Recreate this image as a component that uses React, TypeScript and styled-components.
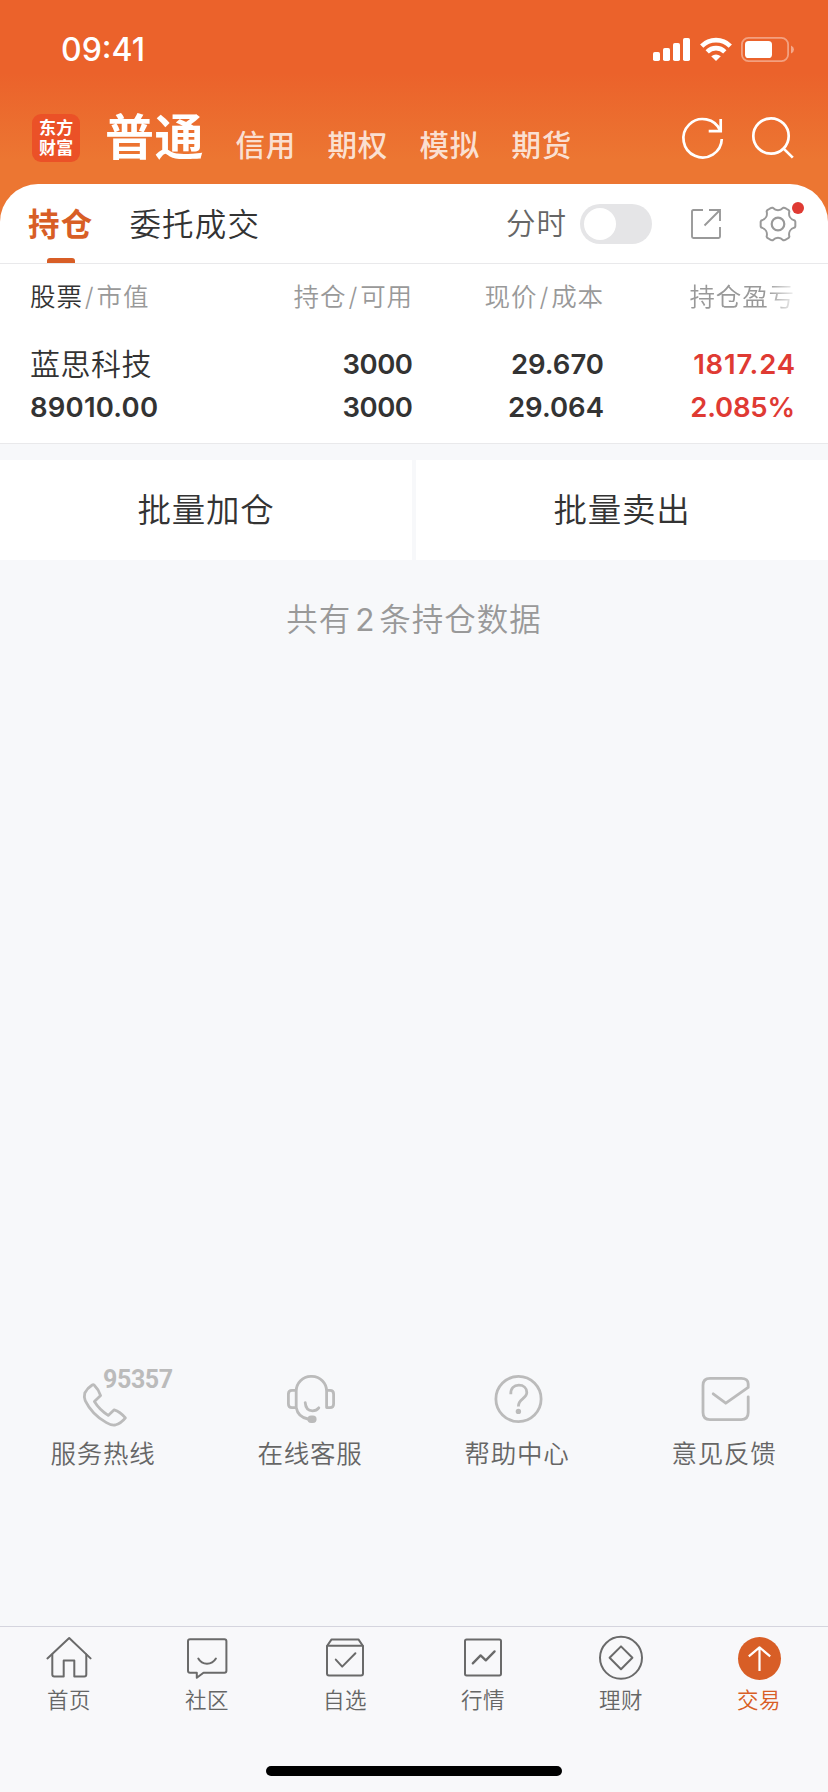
import React from "react";
import styled, { createGlobalStyle } from "styled-components";

const orange = "#d85e26";
const red = "#df3a33";
const ink = "#333333";

const GlobalStyle = createGlobalStyle`
  *, *::before, *::after { box-sizing: border-box; }
  body {
    margin: 0;
    background: #f7f8fa;
    color: ${ink};
    font-family: Inter, "Noto Sans CJK SC", sans-serif;
    font-weight: 350;
    -webkit-font-smoothing: antialiased;
  }
  svg { display: block; flex: none; overflow: visible; }
`;

const Screen = styled.div`
  width: 828px;
  height: 1792px;
  display: flex;
  flex-direction: column;
  overflow: hidden;
  background: linear-gradient(#eb622b 0, #eb622b 73px, #ec7632 160px, #ec7632 240px, #f7f8fa 240px);
`;

const StatusBar = styled.div`
  height: 99px;
  padding: 0 34px 0 61px;
  display: flex;
  align-items: center;
  color: #fff;
`;

const Clock = styled.span`
  flex: 1;
  font-size: 32px;
  line-height: 32px;
  font-weight: 500;
`;

const StatusIcons = styled.div`
  display: flex;
  align-items: center;
  gap: 9px;
`;

const AccountBar = styled.header`
  height: 85px;
  padding: 0 33px 0 32px;
  display: flex;
  align-items: flex-start;
  color: #fff;
`;

const Logo = styled.div`
  width: 48px;
  height: 48px;
  margin-top: 15px;
  padding: 4px 0 0 7px;
  border-radius: 9px;
  background: #eb5127;
  font-size: 17px;
  line-height: 20px;
  font-weight: 700;
  letter-spacing: 0.2px;
`;

const AccountTabs = styled.nav`
  flex: 1;
  display: flex;
  align-items: flex-start;
  gap: 31.6px;
  padding-left: 25px;
`;

const AccountTab = styled.span<{ $active?: boolean }>`
  font-size: ${(p) => (p.$active ? 49 : 29.5)}px;
  font-weight: ${(p) => (p.$active ? 700 : 500)};
  line-height: ${(p) => (p.$active ? 78 : 93)}px;
  letter-spacing: ${(p) => (p.$active ? 0.5 : 0.7)}px;
  color: ${(p) => (p.$active ? "#fff" : "rgba(255,255,255,.8)")};
`;

const HeaderActions = styled.div`
  display: flex;
  gap: 29px;
  padding-top: 17px;
`;

const Card = styled.section`
  height: 260px;
  background: #fff;
  border-radius: 38px 38px 0 0;
  border-bottom: 1px solid #e9e9eb;
`;

const TabRow = styled.div`
  height: 80px;
  padding: 0 32px 0 28px;
  display: flex;
  align-items: center;
  border-bottom: 1px solid #e9e9eb;
`;

const Tab = styled.span<{ $active?: boolean }>`
  height: 79px;
  margin-right: 36px;
  display: flex;
  flex-direction: column;
  align-items: center;
  font-size: 31.5px;
  line-height: 81px;
  letter-spacing: 1.2px;
  font-weight: ${(p) => (p.$active ? 700 : 350)};
  color: ${(p) => (p.$active ? orange : ink)};
`;

const Underline = styled.i`
  width: 28px;
  height: 5px;
  margin-top: -7px;
  border-radius: 3px 3px 0 0;
  background: ${orange};
`;

const Spacer = styled.span`
  flex: 1;
`;

const ToggleLabel = styled.span`
  font-size: 29.5px;
  line-height: 76px;
  margin-top: -1px;
  letter-spacing: 1px;
  color: #666;
`;

const Toggle = styled.span`
  width: 72px;
  height: 40px;
  margin: 0 39px 0 13px;
  padding: 4px;
  border-radius: 20px;
  background: #e5e5e7;
  &::before {
    content: "";
    display: block;
    width: 32px;
    height: 32px;
    border-radius: 50%;
    background: #fff;
  }
`;

const GearButton = styled.span`
  position: relative;
  margin-left: 39px;
`;

const Dot = styled.i`
  position: absolute;
  top: -4px;
  right: -8px;
  width: 12px;
  height: 12px;
  border-radius: 50%;
  background: ${red};
`;

const Grid = styled.div`
  display: grid;
  grid-template-columns: 191px 192px 191px 191px;
  padding-left: 30px;
`;

const HeadCell = styled.span<{ $left?: boolean }>`
  height: 65px;
  line-height: 65px;
  font-size: 25.5px;
  letter-spacing: 0.9px;
  text-align: ${(p) => (p.$left ? "left" : "right")};
  color: #999;
  white-space: nowrap;
  b { font-weight: inherit; color: ${ink}; }
  i { font-style: normal; padding: 0 2px; }
`;

const FadedHeadCell = styled(HeadCell)`
  -webkit-mask-image: linear-gradient(to right, #000 163px, transparent 195px);
  mask-image: linear-gradient(to right, #000 163px, transparent 195px);
`;

const Cell = styled.div<{ $left?: boolean; $red?: boolean }>`
  display: flex;
  flex-direction: column;
  padding-top: 14px;
  font-size: 27.5px;
  line-height: 43px;
  font-weight: 600;
  text-align: ${(p) => (p.$left ? "left" : "right")};
  color: ${(p) => (p.$red ? red : ink)};
`;

const Figure = styled.span<{ $track?: number }>`
  letter-spacing: ${(p) => p.$track ?? 0}px;
  margin-right: ${(p) => -(p.$track ?? 0)}px;
`;

const StockName = styled.span`
  font-size: 30px;
  font-weight: 350;
  letter-spacing: 0.5px;
`;

const BatchRow = styled.div`
  display: grid;
  grid-template-columns: 1fr 1fr;
  gap: 4px;
  padding-top: 16px;
  background: #f7f8fa;
`;

const BatchButton = styled.button`
  height: 100px;
  border: 0;
  padding: 0;
  background: #fff;
  color: ${ink};
  font: 350 33.5px/100px Inter, "Noto Sans CJK SC", sans-serif;
  letter-spacing: 0.8px;
`;

const Body = styled.main`
  flex: 1;
  display: flex;
  flex-direction: column;
  justify-content: space-between;
  background: #f7f8fa;
`;

const Summary = styled.p`
  margin: 38px 0 0;
  text-align: center;
  font-size: 31.5px;
  line-height: 44px;
  letter-spacing: 1px;
  color: #999;
  span { padding: 0 4px; font-weight: 400; }
`;

const Services = styled.div`
  display: grid;
  grid-template-columns: repeat(4, 1fr);
  margin-bottom: 154px;
`;

const Service = styled.div`
  position: relative;
  display: flex;
  flex-direction: column;
  align-items: center;
  padding-right: 1px;
  font-size: 25.5px;
  line-height: 36px;
  letter-spacing: 0.8px;
  color: #666;
  svg { margin: 0 0 12px 1px; }
`;

const HotlineNumber = styled.span`
  position: absolute;
  left: 103px;
  top: -12px;
  font: 700 25px/36px Roboto, sans-serif;
  letter-spacing: -0.4px;
  color: #bbb;
`;

const BottomBar = styled.footer`
  height: 166px;
  border-top: 1px solid #d5d5de;
  background: #f8f8fa;
  display: flex;
  flex-direction: column;
  align-items: center;
  justify-content: space-between;
  padding-bottom: 16px;
`;

const NavItems = styled.nav`
  width: 100%;
  display: grid;
  grid-template-columns: repeat(6, 1fr);
  padding-top: 8px;
`;

const NavItem = styled.span<{ $active?: boolean }>`
  display: flex;
  flex-direction: column;
  align-items: center;
  gap: 4px;
  font-size: 21.5px;
  line-height: 30px;
  letter-spacing: 0.5px;
  color: ${(p) => (p.$active ? orange : "#666")};
`;

const HomeIndicator = styled.div`
  width: 296px;
  height: 10px;
  border-radius: 5px;
  background: #000;
`;

const SignalIcon = () => (
  <svg width="38" height="25" fill="#fff">
    <rect x="0" y="15" width="7" height="9" rx="1.8" />
    <rect x="10" y="11" width="7" height="13" rx="1.8" />
    <rect x="20" y="6" width="7" height="18" rx="1.8" />
    <rect x="30" y="1" width="7" height="23" rx="1.8" />
  </svg>
);

const WifiIcon = () => (
  <svg width="32" height="25" viewBox="0 0 32 25">
    <g fill="none" stroke="#fff" strokeWidth="4.6">
      <path d="M1.7 9.1 A20.2 20.2 0 0 1 30.3 9.1" />
      <path d="M7.2 14.8 A12.4 12.4 0 0 1 24.8 14.8" />
    </g>
    <path fill="#fff" d="M11.2 19.2 Q16 15.6 20.8 19.2 L16 24Z" />
  </svg>
);

const BatteryIcon = () => (
  <svg width="53" height="25" viewBox="0 0 53 25">
    <rect x="0.9" y="0.9" width="46.2" height="23.2" rx="6.6" fill="none" stroke="#fff" strokeOpacity=".4" strokeWidth="1.8" />
    <rect x="4" y="4" width="27" height="17" rx="3.6" fill="#fff" />
    <path d="M50 8.5 Q53 9.8 53 12.5 T50 16.5Z" fill="#fff" fillOpacity=".45" />
  </svg>
);

const RefreshIcon = () => (
  <svg width="42" height="44" viewBox="0 0 42 44" fill="none" stroke="#fff" strokeWidth="2.7">
    <path d="M39.8 23 A19.2 19.2 0 1 1 38.3 14.8" />
    <path d="M38.7 3 V15.2 H26.7" />
  </svg>
);

const SearchIcon = () => (
  <svg width="42" height="44" viewBox="0 0 42 44" fill="none" stroke="#fff" strokeWidth="2.7">
    <circle cx="18" cy="20" r="17.7" />
    <path d="M30.6 32.6 L39.8 41.6" />
  </svg>
);

const ShareIcon = () => (
  <svg width="30" height="30" viewBox="0 0 30 30" fill="none" stroke="#999" strokeWidth="1.9">
    <path d="M12 1 H2.4 Q1 1 1 2.4 V27.6 Q1 29 2.4 29 H27.6 Q29 29 29 27.6 V18" />
    <path d="M18 1 H29 V12 M29 1 L13.5 16.5" />
  </svg>
);

const gearPoint = (deg: number, r: number) => {
  const a = (deg * Math.PI) / 180;
  return `${(18 + r * Math.cos(a)).toFixed(2)} ${(18 + r * Math.sin(a)).toFixed(2)}`;
};

const gearPath =
  [0, 60, 120, 180, 240, 300]
    .map(
      (a, i) =>
        `${i ? "" : `M${gearPoint(-12, 17)}`} Q${gearPoint(a - 8, 17.7)} ${gearPoint(a - 5, 17.4)} L${gearPoint(a + 5, 17.4)} Q${gearPoint(a + 8, 17.7)} ${gearPoint(a + 12, 17)} C${gearPoint(a + 21, 13.2)} ${gearPoint(a + 39, 13.2)} ${gearPoint(a + 48, 17)}`
    )
    .join(" ") + "Z";

const GearIcon = () => (
  <svg width="36" height="36" viewBox="0 0 36 36" fill="none" stroke="#999" strokeLinejoin="round">
    <path d={gearPath} strokeWidth="2" />
    <circle cx="18" cy="18" r="6.3" strokeWidth="2.2" />
  </svg>
);

const ServiceSvg = styled.svg.attrs({ width: 48, height: 50, viewBox: "0 0 48 50", fill: "none" })`
  stroke: #bbb;
  stroke-width: 2.8;
  stroke-linecap: round;
  stroke-linejoin: round;
`;

const PhoneIcon = () => (
  <ServiceSvg>
    <path d="M12.2 11 Q13.3 10.2 14.3 11.2 Q18.8 15.6 20.6 21.6 L14.4 27.6 Q19.5 36 28.2 41.4 L34.2 35.8 Q40 37.6 45.4 43.8 Q41 49.4 35.2 51 Q31.4 51.6 26.4 48.6 Q12 40.6 5.2 26.6 Q3.8 22.4 4.8 19 Q7.3 14 12.2 11Z" />
  </ServiceSvg>
);

const HeadsetIcon = () => (
  <ServiceSvg>
    <path d="M9.2 33.6 V17 A14.6 14.6 0 0 1 23.8 2.4 H25 A14.6 14.6 0 0 1 39.6 17 V33.6 H43 Q46.6 33.6 46.6 30 V20 Q46.6 16.4 43 16.4 H39.6 M9.2 16.4 H5 Q1.4 16.4 1.4 20 V30 Q1.4 33.6 5 33.6 H9.2 Q11 43.4 21 45" />
    <path d="M18.2 28.7 C18.6 34 21.5 36.8 25.5 36.8 C28 36.8 30.3 35.8 31.8 33.8" />
    <rect x="21.8" y="43" width="6.4" height="4.6" rx="2.3" fill="#bbb" />
  </ServiceSvg>
);

const HelpIcon = () => (
  <ServiceSvg>
    <circle cx="24.5" cy="25" r="22.6" />
    <path strokeLinecap="butt" d="M16.8 20.2 C16.6 14 20 11.2 24.8 11.2 C29.6 11.2 32.8 14.2 32.8 18.4 C32.8 21.2 31 22.8 28.6 24.8 C25.8 27 24.4 28.8 24.4 32.4" />
    <circle cx="24.4" cy="37.4" r="2.7" fill="#bbb" stroke="none" />
  </ServiceSvg>
);

const MailIcon = () => (
  <ServiceSvg>
    <path d="M12.2 19.8 L24.8 29.2 L47.2 13.4 V10 Q47.2 4.4 40.2 4.4 H9 Q2 4.4 2 11.4 V38.6 Q2 45.6 9 45.6 H40.2 Q47.2 45.6 47.2 38.6 V22.8" />
  </ServiceSvg>
);

const NavSvg = styled.svg.attrs({ width: 46, height: 46, viewBox: "0 0 46 46", fill: "none" })`
  stroke: #6a6a6a;
  stroke-width: 2;
  stroke-linecap: round;
  stroke-linejoin: round;
`;

const HomeIcon = () => (
  <NavSvg>
    <path d="M1.4 23.4 L23.2 3 L44.6 23.4" />
    <path d="M6.3 19.5 V39.4 Q6.3 41.4 8.3 41.4 H17.7 V25.4 H28.3 V41.4 H38.3 Q40.3 41.4 40.3 39.4 V19.5" />
  </NavSvg>
);

const CommunityIcon = () => (
  <NavSvg>
    <path d="M6 4.3 H40.4 Q42.4 4.3 42.4 6.3 V35.7 Q42.4 37.7 40.4 37.7 H19.5 L12.8 42.8 V37.7 H6 Q4 37.7 4 35.7 V6.3 Q4 4.3 6 4.3Z" />
    <path d="M14.3 23.6 Q17.2 28.8 23 28.8 T31.9 23.6" />
  </NavSvg>
);

const WatchlistIcon = () => (
  <NavSvg>
    <path d="M5 11 L9.6 4.4 H36.4 L41 11 V38.4 Q41 40.4 39 40.4 H7 Q5 40.4 5 38.4Z M5 10.8 H41" />
    <path d="M13.8 24.6 L20.2 31.6 L33.4 18.2" />
  </NavSvg>
);

const MarketIcon = () => (
  <NavSvg>
    <rect x="5" y="4.4" width="36" height="36" rx="1.6" />
    <path strokeWidth="2.3" d="M12.8 28.4 L20.6 20.4 L25.8 25.4 L34.6 16.4" />
  </NavSvg>
);

const WealthIcon = () => (
  <NavSvg>
    <circle cx="23" cy="22.8" r="21" />
    <path d="M23 11.4 L34.4 22.8 L23 34.2 L11.6 22.8Z" />
  </NavSvg>
);

const TradeIcon = () => (
  <NavSvg>
    <circle cx="23.5" cy="23.5" r="21.5" fill={orange} stroke="none" />
    <path stroke="#fff" strokeWidth="2.2" strokeLinecap="butt" d="M23.5 36 V12.6 M12.8 21.4 L23.5 12.4 L34.2 21.4" />
  </NavSvg>
);

const services = [
  { label: "服务热线", icon: <PhoneIcon />, number: "95357" },
  { label: "在线客服", icon: <HeadsetIcon /> },
  { label: "帮助中心", icon: <HelpIcon /> },
  { label: "意见反馈", icon: <MailIcon /> },
];

const navItems = [
  { label: "首页", icon: <HomeIcon /> },
  { label: "社区", icon: <CommunityIcon /> },
  { label: "自选", icon: <WatchlistIcon /> },
  { label: "行情", icon: <MarketIcon /> },
  { label: "理财", icon: <WealthIcon /> },
  { label: "交易", icon: <TradeIcon />, active: true },
];

export default function App() {
  return (
    <Screen>
      <GlobalStyle />
      <StatusBar>
        <Clock>09:41</Clock>
        <StatusIcons>
          <SignalIcon />
          <WifiIcon />
          <BatteryIcon />
        </StatusIcons>
      </StatusBar>
      <AccountBar>
        <Logo>东方<br />财富</Logo>
        <AccountTabs>
          <AccountTab $active>普通</AccountTab>
          {["信用", "期权", "模拟", "期货"].map((t) => (
            <AccountTab key={t}>{t}</AccountTab>
          ))}
        </AccountTabs>
        <HeaderActions>
          <RefreshIcon />
          <SearchIcon />
        </HeaderActions>
      </AccountBar>
      <Card>
        <TabRow>
          <Tab $active>
            持仓
            <Underline />
          </Tab>
          <Tab>委托成交</Tab>
          <Spacer />
          <ToggleLabel>分时</ToggleLabel>
          <Toggle />
          <ShareIcon />
          <GearButton>
            <GearIcon />
            <Dot />
          </GearButton>
        </TabRow>
        <Grid>
          <HeadCell $left><b>股票</b><i>/</i>市值</HeadCell>
          <HeadCell>持仓<i>/</i>可用</HeadCell>
          <HeadCell>现价<i>/</i>成本</HeadCell>
          <FadedHeadCell>持仓盈亏</FadedHeadCell>
        </Grid>
        <Grid>
          <Cell $left>
            <StockName>蓝思科技</StockName>
            <Figure $track={0.2}>89010.00</Figure>
          </Cell>
          <Cell>
            <Figure $track={-0.5}>3000</Figure>
            <Figure $track={-0.5}>3000</Figure>
          </Cell>
          <Cell>
            <Figure>29.670</Figure>
            <Figure>29.064</Figure>
          </Cell>
          <Cell $red>
            <Figure $track={0.8}>1817.24</Figure>
            <Figure $track={-0.2}>2.085%</Figure>
          </Cell>
        </Grid>
      </Card>
      <BatchRow>
        <BatchButton>批量加仓</BatchButton>
        <BatchButton>批量卖出</BatchButton>
      </BatchRow>
      <Body>
        <Summary>共有<span>2</span>条持仓数据</Summary>
        <Services>
          {services.map((s) => (
            <Service key={s.label}>
              {s.icon}
              {s.number && <HotlineNumber>{s.number}</HotlineNumber>}
              {s.label}
            </Service>
          ))}
        </Services>
      </Body>
      <BottomBar>
        <NavItems>
          {navItems.map((n) => (
            <NavItem key={n.label} $active={n.active}>
              {n.icon}
              {n.label}
            </NavItem>
          ))}
        </NavItems>
        <HomeIndicator />
      </BottomBar>
    </Screen>
  );
}
